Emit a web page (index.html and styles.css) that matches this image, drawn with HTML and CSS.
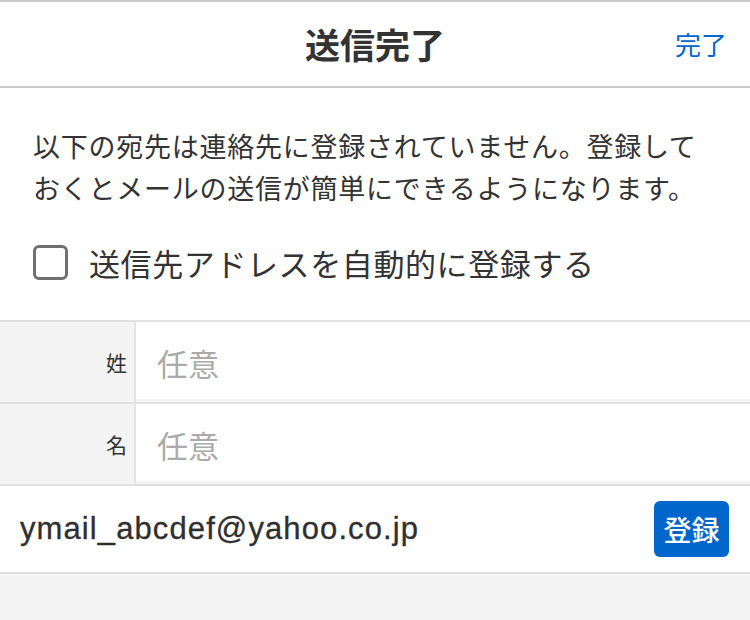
FILE: index.html
```html
<!DOCTYPE html>
<html lang="ja">
<head>
<meta charset="utf-8">
<title>送信完了</title>
<link rel="stylesheet" href="styles.css">
</head>
<body>
<div class="page">
  <header class="header">
    <span class="header-side"></span>
    <h1 class="title">送信完了</h1>
    <span class="header-side header-right"><a class="done" href="#">完了</a></span>
  </header>

  <section class="intro">
    <p class="message">以下の宛先は連絡先に登録されていません。登録して<br>おくとメールの送信が簡単にできるようになります。</p>
    <label class="check-row">
      <span class="checkbox"></span>
      <span class="check-label">送信先アドレスを自動的に登録する</span>
    </label>
  </section>

  <section class="form">
    <div class="row">
      <div class="row-label">姓</div>
      <div class="row-input"><span class="placeholder">任意</span></div>
    </div>
    <div class="row">
      <div class="row-label">名</div>
      <div class="row-input"><span class="placeholder">任意</span></div>
    </div>
    <div class="email-row">
      <span class="email">ymail_abcdef@yahoo.co.jp</span>
      <button class="register" type="button">登録</button>
    </div>
  </section>
</div>
</body>
</html>
```
FILE: styles.css
```css
html, body {
  margin: 0;
  padding: 0;
  background: #f4f4f4;
}

body {
  font-family: "Noto Sans CJK JP", "Noto Sans", sans-serif;
  color: #333333;
}

.page {
  width: 750px;
  min-height: 620px;
  background: #f4f4f4;
}

.header {
  display: grid;
  grid-template-columns: 1fr auto 1fr;
  align-items: center;
  height: 84px;
  background: #ffffff;
  border-top: 2px solid #c8c8c8;
  border-bottom: 2px solid #c8c8c8;
}

.title {
  margin: 0;
  font-size: 35px;
  font-weight: 700;
  line-height: 84px;
  color: #333333;
}

.header-right {
  display: flex;
  justify-content: flex-end;
  padding-right: 23px;
}

.done {
  font-size: 26px;
  color: #0066cc;
  text-decoration: none;
  line-height: 84px;
}

.intro {
  background: #ffffff;
  padding: 37px 0 33px 33px;
}

.message {
  margin: 0;
  font-size: 27px;
  letter-spacing: 0.75px;
  line-height: 42px;
  color: #333333;
}

.check-row {
  display: flex;
  align-items: center;
  height: 50px;
  margin-top: 28px;
}

.checkbox {
  box-sizing: border-box;
  width: 35px;
  height: 35px;
  border: 3px solid #707070;
  border-radius: 6px;
  background: #ffffff;
  flex: none;
}

.check-label {
  margin-left: 21px;
  font-size: 31px;
  letter-spacing: 0.6px;
  color: #333333;
}

.form {
  border-top: 2px solid #e0e0e0;
}

.row {
  display: flex;
  height: 80px;
  border-bottom: 2px solid #e0e0e0;
}

.row-label {
  box-sizing: border-box;
  width: 136px;
  padding-right: 7px;
  background: #f4f4f4;
  border-right: 2px solid #e4e4e4;
  display: flex;
  align-items: center;
  justify-content: flex-end;
  font-size: 21px;
  color: #333333;
}

.row-input {
  flex: 1;
  background: #ffffff;
  display: flex;
  align-items: center;
  padding-left: 21px;
  box-shadow: inset 0 -3px 0 #f3f3f3;
}

.placeholder {
  font-size: 31px;
  color: #aaaaaa;
}

.email-row {
  display: flex;
  align-items: center;
  justify-content: space-between;
  height: 86px;
  padding: 0 21px 0 20px;
  background: #ffffff;
  border-bottom: 2px solid #e0e0e0;
}

.email {
  font-family: "Liberation Sans", Arial, sans-serif;
  font-size: 31px;
  letter-spacing: 1.1px;
  color: #2f2f2f;
  -webkit-text-stroke: 0.3px #2f2f2f;
}

.register {
  width: 75px;
  height: 56px;
  border: none;
  border-radius: 6px;
  background: #0066cc;
  color: #ffffff;
  font-family: "Noto Sans CJK JP", sans-serif;
  font-size: 28px;
  font-weight: 500;
  padding: 0;
}
```
